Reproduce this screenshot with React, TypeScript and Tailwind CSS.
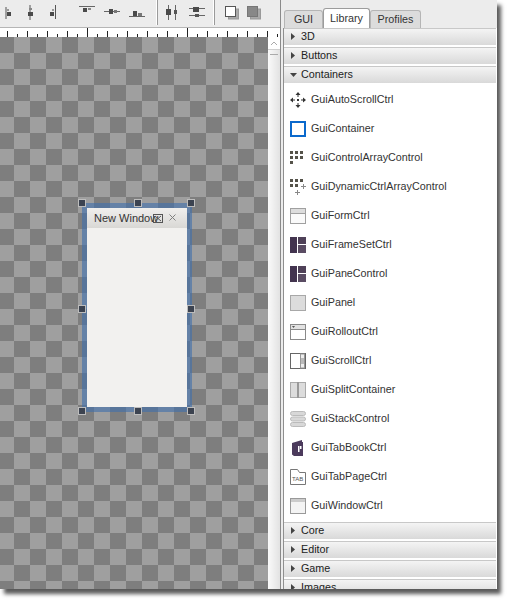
import React from 'react';

const dk = '#4a4a4a';

function ToolIcon({ w = 16, ml = 0, children }: { w?: number; ml?: number; children: React.ReactNode }) {
  return (
    <svg width={w} height={16} viewBox={`0 0 ${w} 16`} className="shrink-0" style={{ marginLeft: ml }}>
      {children}
    </svg>
  );
}

function Toolbar() {
  return (
    <div className="flex h-[28px] items-start border-b border-[#b5b5b5] bg-[#ececec] pt-[5px]">
      <ToolIcon w={12} ml={2}>
        <path d="M4 2v12" stroke="#555" />
        <rect x="5" y="7" width="4" height="4" fill={dk} />
        <rect x="5" y="4" width="2" height="2" fill="#999" />
      </ToolIcon>
      <ToolIcon w={12} ml={10}>
        <path d="M6 0v15" stroke="#555" />
        <rect x="4" y="7" width="5" height="4" fill={dk} />
        <rect x="5" y="3" width="3" height="2" fill="#888" />
      </ToolIcon>
      <ToolIcon w={12} ml={11}>
        <path d="M8.5 0v14" stroke="#555" />
        <rect x="3" y="7" width="4" height="4" fill={dk} />
        <rect x="5" y="4" width="2" height="2" fill="#999" />
      </ToolIcon>
      <ToolIcon w={18} ml={20}>
        <path d="M0 1.5h16" stroke="#666" />
        <rect x="4" y="3" width="4" height="4" fill={dk} />
        <rect x="9" y="3" width="3" height="2" fill="#888" />
      </ToolIcon>
      <ToolIcon w={18} ml={7}>
        <path d="M0 6.5h16" stroke="#666" />
        <rect x="5" y="4" width="4" height="5" fill={dk} />
        <rect x="10" y="5" width="3" height="3" fill="#777" />
      </ToolIcon>
      <ToolIcon w={18} ml={7}>
        <path d="M0 11.5h16" stroke="#666" />
        <rect x="4" y="6" width="4" height="5" fill={dk} />
        <rect x="9" y="8" width="4" height="3" fill="#777" />
      </ToolIcon>
      <div className="ml-[9px] h-[25px] w-[2px] -translate-y-[5px] border-r border-[#9a9a9a] bg-white" />
      <ToolIcon w={14} ml={7}>
        <path d="M3.5 0v15M10.5 0v15" stroke="#666" />
        <rect x="1" y="4" width="5" height="6" fill={dk} />
        <rect x="9" y="5" width="3" height="4" fill="#555" />
      </ToolIcon>
      <ToolIcon w={18} ml={9}>
        <path d="M1 3.5h16M1 10.5h16" stroke="#666" />
        <rect x="5" y="2" width="6" height="5" fill={dk} />
        <rect x="7" y="9" width="4" height="3" fill="#555" />
      </ToolIcon>
      <div className="ml-[7px] h-[25px] w-[2px] -translate-y-[5px] border-r border-[#9a9a9a] bg-white" />
      <ToolIcon w={14} ml={10}>
        <rect x="3.5" y="4" width="10" height="10" fill="#aaa" stroke="#999" />
        <rect x="0.5" y="1.5" width="10" height="10" fill="#fff" stroke="#555" />
      </ToolIcon>
      <ToolIcon w={14} ml={8}>
        <rect x="3.5" y="4" width="10" height="10" fill="#aaa" stroke="#999" />
        <rect x="0.5" y="1.5" width="10" height="10" fill="#888" stroke="#777" />
      </ToolIcon>
    </div>
  );
}

function Ruler() {
  const ticks = Array.from({ length: 28 }, (_, i) => 7 + i * 10);
  return (
    <svg width={280} height={9} viewBox="0 0 280 9" className="block bg-white">
      {ticks.map((x, i) => (
        <path key={x} d={`M${x + 0.5} ${x === 87 || x === 187 ? 0 : i % 2 ? 6 : 3}V9`} stroke="#222" />
      ))}
    </svg>
  );
}

function Handle({ className }: { className: string }) {
  return <div className={`absolute h-[8px] w-[8px] border border-[#bdbdbd] bg-[#3c4350] ${className}`} />;
}

function Canvas() {
  return (
    <div className="relative flex-1 bg-[conic-gradient(#9f9f9f_25%,#7e7e7e_0_50%,#9f9f9f_0_75%,#7e7e7e_0)] bg-[length:32px_32px] bg-[position:-2px_0]">
      <div className="absolute left-[82px] top-[166px] h-[209px] w-[110px] bg-[#3f6fae]/60 p-[5px]">
        <div className="h-full w-full bg-[#f2f1ef]">
          <div className="relative flex h-[20px] items-center bg-gradient-to-b from-[#f0efed] to-[#d9d8d5] pl-[7px] text-[11px] text-[#333]">
            <span>New Window</span>
            <svg width="10" height="9" viewBox="0 0 10 9" className="absolute left-[66px] top-[6px]">
              <rect x="0.5" y="0.5" width="9" height="8" fill="none" stroke="#555" />
              <path d="M2 2l6 5M8 2L2 7" stroke="#555" />
            </svg>
            <svg width="7" height="7" viewBox="0 0 7 7" className="absolute left-[82px] top-[6px]">
              <path d="M0.5 0.5l6 6M6.5 0.5l-6 6" stroke="#808080" />
            </svg>
          </div>
        </div>
      </div>
      <Handle className="left-[78px] top-[162px]" />
      <Handle className="left-[134px] top-[162px]" />
      <Handle className="left-[187px] top-[162px]" />
      <Handle className="left-[78px] top-[268px]" />
      <Handle className="left-[187px] top-[268px]" />
      <Handle className="left-[78px] top-[370px]" />
      <Handle className="left-[134px] top-[370px]" />
      <Handle className="left-[187px] top-[370px]" />
    </div>
  );
}

function Scrollbar() {
  return (
    <div className="flex w-[12px] flex-col bg-[#eeeeee]">
      <div className="flex h-[13px] items-center justify-center border-b border-[#cfcfcf] bg-white">
        <svg width="8" height="5" viewBox="0 0 8 5">
          <path d="M1 4l3-3 3 3" fill="none" stroke="#aaa" />
        </svg>
      </div>
      <div className="flex-1 bg-gradient-to-r from-[#fafafa] to-[#e2e2e2]">
        <div className="mx-[2px] mt-[4px] h-[1px] bg-[#aaa]" />
      </div>
    </div>
  );
}

function Header({ label, open = false }: { label: string; open?: boolean }) {
  return (
    <div className="mb-[2px] flex h-[17px] shrink-0 items-center gap-[4px] border-t border-[#c8c8c8] bg-gradient-to-b from-[#f4f4f4] to-[#d9d9d9] pb-[1px] pl-[6px] text-[10.75px] leading-none text-[#222]">
      <svg width="7" height="7" viewBox="0 0 7 7" className="shrink-0">
        {open ? <path d="M0 2h7L3.5 6z" fill="#444" /> : <path d="M1 0l4 3.5L1 7z" fill="#444" />}
      </svg>
      <span>{label}</span>
    </div>
  );
}

const stroke = '#8a8a8a';

const paneIcon = (
  <g>
    <rect x="0" y="0" width="7" height="16" fill="#43344f" />
    <rect x="8" y="0" width="8" height="7" fill="#4f4158" />
    <rect x="8" y="8" width="8" height="8" fill="#5a4c63" />
  </g>
);

const icons: Record<string, React.ReactNode> = {
  GuiAutoScrollCtrl: (
    <g fill="#333">
      <rect x="7" y="7" width="2" height="2" />
      <path d="M8 0l2.5 3h-5zM8 16l2.5-3h-5zM0 8l3-2.5v5zM16 8l-3-2.5v5z" />
      <path d="M3 8h2M11 8h2M8 3v2M8 11v2" stroke="#333" />
    </g>
  ),
  GuiContainer: <rect x="1" y="1" width="14" height="14" fill="#fff" stroke="#0b69cc" strokeWidth="2" />,
  GuiControlArrayControl: (
    <g fill="#55534a">
      <rect x="0" y="1" width="3" height="3" />
      <rect x="5" y="1" width="3" height="3" />
      <rect x="10" y="1" width="3" height="3" />
      <rect x="0" y="6" width="3" height="3" />
      <rect x="5" y="6" width="3" height="3" />
      <rect x="10" y="6" width="3" height="3" />
      <rect x="0" y="11" width="3" height="3" />
    </g>
  ),
  GuiDynamicCtrlArrayControl: (
    <g>
      <g fill="#55534a">
        <rect x="0" y="0" width="3" height="3" />
        <rect x="5" y="0" width="3" height="3" />
        <rect x="10" y="0" width="3" height="3" />
        <rect x="0" y="5" width="3" height="3" />
        <rect x="5" y="5" width="3" height="3" />
      </g>
      <path d="M11 7.5h5M13.5 5v5M5 13.5h5M7.5 11v5" stroke="#888" fill="none" />
    </g>
  ),
  GuiFormCtrl: (
    <g>
      <rect x="0.5" y="0.5" width="15" height="15" fill="#fafafa" stroke="#a0a0a0" />
      <rect x="1" y="1" width="14" height="4" fill="#ddd" />
      <path d="M1 5.5h14" stroke="#a0a0a0" />
    </g>
  ),
  GuiFrameSetCtrl: paneIcon,
  GuiPaneControl: paneIcon,
  GuiPanel: <rect x="0.5" y="0.5" width="15" height="15" fill="#dcdcdc" stroke="#a8a8a8" />,
  GuiRolloutCtrl: (
    <g>
      <rect x="0.5" y="0.5" width="15" height="15" fill="#fff" stroke={stroke} />
      <rect x="1" y="1" width="14" height="4" fill="#e2e2e2" />
      <path d="M1 5.5h14" stroke={stroke} />
      <path d="M2 2h3l-1.5 2z" fill="#555" />
    </g>
  ),
  GuiScrollCtrl: (
    <g>
      <rect x="0.5" y="0.5" width="15" height="15" fill="#fff" stroke="#666" />
      <rect x="10.5" y="1" width="4" height="14" fill="#eee" stroke="#999" />
      <rect x="11" y="5" width="3" height="6" fill="#bbb" />
    </g>
  ),
  GuiSplitContainer: (
    <g>
      <rect x="0.5" y="0.5" width="15" height="15" fill="#dcdcdc" stroke="#aaa" />
      <path d="M8 0v16" stroke="#999" strokeWidth="2" />
    </g>
  ),
  GuiStackControl: (
    <g fill="#d8d8d8" stroke="#bbb">
      <rect x="0.5" y="0.5" width="15" height="4" rx="2" />
      <rect x="0.5" y="6" width="15" height="4" rx="2" />
      <rect x="0.5" y="11.5" width="15" height="4" rx="2" />
    </g>
  ),
  GuiTabBookCtrl: (
    <g>
      <path d="M2 3L12 0v2h1v14H4L2 14.5z" fill="#4b3a5c" />
      <rect x="8" y="6" width="1.5" height="6" fill="#fff" />
      <rect x="10" y="6" width="1.5" height="3" fill="#fff" />
    </g>
  ),
  GuiTabPageCtrl: (
    <g>
      <path d="M0.5 15.5V0.5h7l2 3h6v12z" fill="#fff" stroke="#777" />
      <text x="2" y="12" fontSize="6" fill="#555" fontFamily="'Liberation Sans', sans-serif">TAB</text>
    </g>
  ),
  GuiWindowCtrl: (
    <g>
      <rect x="0.5" y="0.5" width="15" height="15" fill="#f4f4f4" stroke="#999" />
      <rect x="1" y="1" width="14" height="3" fill="#ccc" />
    </g>
  ),
};

function Row({ name }: { name: string }) {
  return (
    <div className="flex h-[29px] shrink-0 items-center gap-[5px] pl-[6px] text-[10.75px] leading-none text-[#333]">
      <svg width="16" height="16" viewBox="0 0 16 16" className="shrink-0">
        {icons[name]}
      </svg>
      <span>{name}</span>
    </div>
  );
}

function Library() {
  return (
    <div className="flex min-h-0 flex-1 flex-col overflow-hidden border-l border-[#8f8f8f] bg-white pr-[1px]">
      <Header label="3D" />
      <Header label="Buttons" />
      <Header label="Containers" open />
      <div className="flex flex-col pb-[2px]">
        {Object.keys(icons).map((name) => (
          <Row key={name} name={name} />
        ))}
      </div>
      <Header label="Core" />
      <Header label="Editor" />
      <Header label="Game" />
      <Header label="Images" />
    </div>
  );
}

function Tabs() {
  return (
    <div className="flex h-[28px] items-end bg-[#ececec] pl-[1px] text-[10.75px] leading-none text-[#333]">
      <div className="flex h-[18px] w-[39px] items-center justify-center rounded-t-[3px] border border-b-0 border-[#b5b5b5] bg-[#dcdcdc]">GUI</div>
      <div className="flex h-[20px] w-[47px] items-center justify-center rounded-t-[3px] border border-b-0 border-[#9c9c9c] bg-white">Library</div>
      <div className="flex h-[18px] w-[51px] items-center justify-center rounded-t-[3px] border border-b-0 border-[#b5b5b5] bg-[#dcdcdc]">Profiles</div>
    </div>
  );
}

export default function App() {
  return (
    <div className="h-[604px] w-[512px] bg-white font-['Liberation_Sans',Arial,sans-serif]">
      <div className="flex h-[589px] w-[497px] bg-[#ececec] shadow-[4px_5px_4px_rgba(0,0,0,0.65)]">
        <div className="flex w-[281px] shrink-0 flex-col border-r border-[#8a8a8a]">
          <Toolbar />
          <Ruler />
          <div className="flex min-h-0 flex-1">
            <Canvas />
            <Scrollbar />
          </div>
        </div>
        <div className="flex min-w-0 flex-1 flex-col pl-[2px]">
          <Tabs />
          <Library />
        </div>
      </div>
    </div>
  );
}
